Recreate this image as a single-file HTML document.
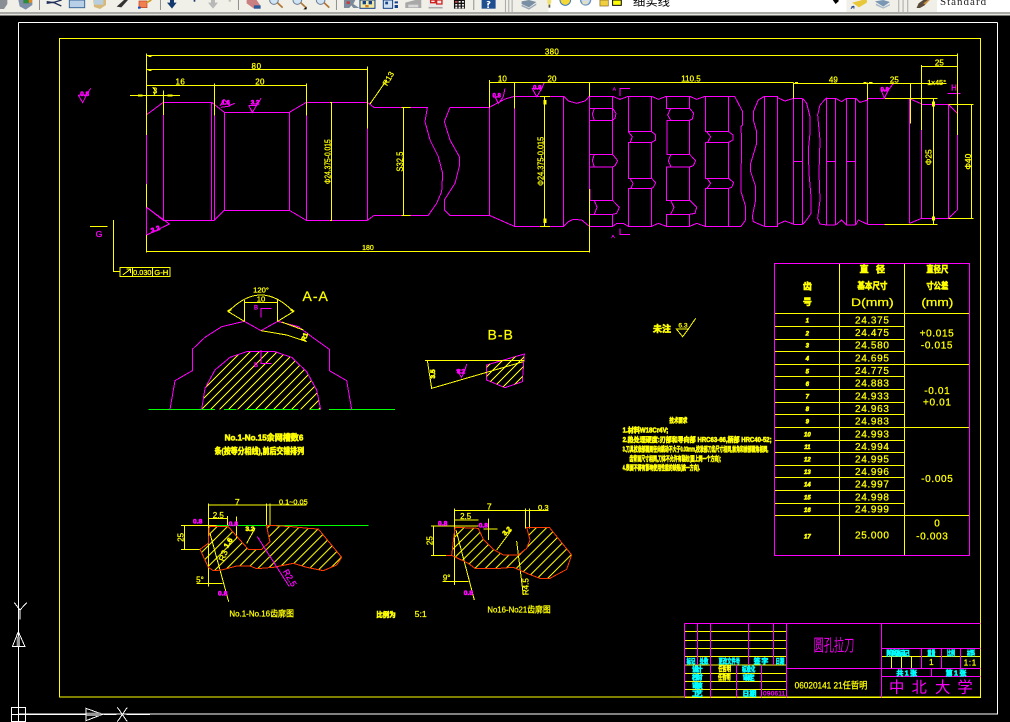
<!DOCTYPE html>
<html><head><meta charset="utf-8"><title>圆孔拉刀</title>
<style>
html,body{margin:0;padding:0;background:#000;width:1010px;height:722px;overflow:hidden}
svg{display:block;position:absolute;left:0;top:0}
.l{fill:none;stroke-width:3;shape-rendering:crispEdges}
.m{stroke:#f0f}.y{stroke:#ff0}.g{stroke:#0f0}.r{stroke:#ff3c00}.w{stroke:#fff}
text{font-family:"Liberation Sans","Noto Sans CJK SC",sans-serif;text-anchor:middle}
.ty{fill:#ff0;stroke:#ff0;stroke-width:.8}.tm{fill:#f0f;stroke:#f0f;stroke-width:.8}.tc{fill:#0ff;stroke:#0ff;stroke-width:.8}
.b{font-weight:700;stroke-width:1.8}
.s{text-anchor:start}
</style></head><body>
<svg width="1010" height="722" viewBox="0 0 1010 722" xmlns="http://www.w3.org/2000/svg">
<defs>
<pattern id="h1" patternUnits="userSpaceOnUse" width="27" height="27"><path d="M-3 30L30 -3M-16 16L16 -16M11 43L43 11" stroke="#ff0" stroke-width="2.4" fill="none" shape-rendering="crispEdges"/></pattern>
<pattern id="h2" patternUnits="userSpaceOnUse" width="31" height="31"><path d="M-3 34L34 -3M-18 18L18 -18M13 49L49 13" stroke="#ff0" stroke-width="2.4" fill="none" shape-rendering="crispEdges"/></pattern>
</defs>
<rect width="1010" height="722" fill="#000"/>

<!-- toolbar -->
<rect width="1010" height="15.5" fill="#f0efe8"/>
<rect y="12" width="1010" height="2" fill="#a8a8a4"/>
<rect y="14" width="1010" height="1" fill="#e4e3dc"/>
<rect x="548.5" width="298" height="12" fill="#fff"/>
<rect x="937" width="73" height="12" fill="#fff"/>
<g transform="scale(.3333)">
<path d="M0 0h22v12l-10 15H0z" fill="#8a8f96"/>
<path d="M55 0h42v15l-20 14-18-10z" fill="#7d8fa8"/><path d="M70 0h18v10H70z" fill="#2d8a3d"/><path d="M86 0h10v8H86z" fill="#e08a20"/>
<rect x="117" width="3" height="30" fill="#8f8f8f"/>
<path d="M140 5l22 3 22 10M140 10l25-4 20-6" stroke="#1f2f5a" stroke-width="4" fill="none"/>
<rect x="208" width="46" height="23" fill="#b8cfe8" stroke="#3c6a9c" stroke-width="3"/>
<path d="M280 0h38v15l-18 12-18-6z" fill="#d8b878"/><rect x="282" width="28" height="14" fill="#b8cfe0"/>
<path d="M350 20l22-20h12l-20 22z" fill="#333"/>
<rect x="417" y="3" width="24" height="20" fill="#f08050" stroke="#c04020" stroke-width="2"/><rect x="414" y="20" width="8" height="6" fill="#0b50c0"/><path d="M440 8l14-8" stroke="#c8a020" stroke-width="5"/>
<rect x="480" width="3" height="30" fill="#8f8f8f"/>
<path d="M510 0h12v8h8l-14 18-15-18h9z" fill="#13386e"/><rect x="581" width="5" height="5" fill="#13386e"/>
<path d="M633 0h12v8h9l-15 18-15-18h9z" fill="#b8b8b8"/><rect x="686" width="7" height="5" fill="#c0c0c0"/>
<rect x="714" width="3" height="30" fill="#8f8f8f"/>
<path d="M740 0h30l10 15v11h-18l-22-16z" fill="#c88080"/><path d="M762 16h20v10h-20z" fill="#2a5a9a"/>
<g fill="#cfe4f4" stroke="#6a7a90" stroke-width="3"><circle cx="822" cy="0" r="13"/><circle cx="892" cy="0" r="13"/><circle cx="962" cy="0" r="13"/></g>
<path d="M832 8l16 15M902 8l16 15M972 8l16 15" stroke="#b07838" stroke-width="5"/>
<path d="M910 28l10-8v8z" fill="#000"/>
<rect x="1008" width="3" height="30" fill="#8f8f8f"/>
<g transform="translate(1020,0)">
<path d="M12 0h34l-6 12 18 12H40l-6-8-6 8H12z" fill="#7a8a9a"/><rect x="20" y="4" width="10" height="8" fill="#c04040"/>
<rect x="60" width="45" height="25" fill="#f0e8a0" stroke="#14408a" stroke-width="3"/><rect x="68" y="3" width="10" height="10" fill="#14408a"/><rect x="86" y="3" width="10" height="10" fill="#14408a"/><rect x="76" y="15" width="10" height="7" fill="#d08020"/>
<rect x="130" width="28" height="25" fill="#cfe0f0" stroke="#14408a" stroke-width="3"/><rect x="136" y="5" width="8" height="8" fill="#14408a"/><path d="M164 4h10v6h-10zM164 15h10v9h-10z" fill="#14408a"/>
<path d="M196 8l30-8h18v24h-48z" fill="#a8a8a8"/><path d="M205 14h30v8h-30z" fill="#d8d8d8"/>
<path d="M266 0h42v18l-5 7h-37z" fill="#e8e8e8"/><path d="M272 0h14v8h-14zM290 0h16v12h-16z" fill="none" stroke="#d02020" stroke-width="4"/><rect x="266" y="22" width="42" height="3" fill="#888"/>
<rect x="342" width="33" height="26" fill="#111"/><path d="M346 3h6v5h-6zM356 3h6v5h-6zM366 3h6v5h-6zM346 12h6v5h-6zM356 12h6v5h-6zM366 12h6v5h-6zM346 20h6v5h-6zM356 20h6v5h-6zM366 20h6v5h-6z" fill="#f4f0f0"/><path d="M346 3h6v5h-6z" fill="#e03030"/>
<rect x="400" width="3" height="30" fill="#8f8f8f"/>
<rect x="425" width="42" height="26" fill="#1f4f90"/><path d="M440 4q10-4 12 4l-5 5v4h-5v-7l5-3q-3-3-6 0zM442 19h5v5h-5z" fill="#fff"/>
<path d="M495 0h3v36h-3zM505 0h3v36h-3zM515 0h3v36h-3z" fill="#a8a8a8"/>
<path d="M545 4l22-4 22 6-22 16-22-10z" fill="#7a8ea4"/><path d="M545 14l22 10 22-14v5l-22 14-22-10z" fill="#9aa8b8"/>
</g>
<path d="M1642 0h12v8l-3 5v9h-6v-9l-3-5z" fill="#f0e070"/><rect x="1646" y="14" width="5" height="9" fill="#555"/>
<circle cx="1696" cy="0" r="16" fill="#f5d838" stroke="#3a7ac0" stroke-width="3"/>
<g transform="translate(680,0)">
<circle cx="1077" cy="0" r="15" fill="#d0dcec" stroke="#6a90c0" stroke-width="4"/><rect x="1068" y="3" width="14" height="10" fill="#e0e0c0"/>
<rect x="1120" y="0" width="25" height="18" fill="#f0d040" stroke="#806020" stroke-width="2"/>
<rect x="1158" y="0" width="26" height="16" fill="#ff0" stroke="#000" stroke-width="3"/>
</g>
<path d="M2498 -1h18v5l-9 8z" fill="#000"/>
<g transform="translate(2040,0)">
<path d="M517 8l30-8h14v8l-24 14z" fill="#e8c838"/><path d="M513 26l8-8M515 20h7v6" stroke="#1a3a8a" stroke-width="3" fill="none"/>
<path d="M585 4l25-4 20 6-20 14z" fill="#7a98b4"/><path d="M588 10l22 12 20-10v4l-20 10-22-10z" fill="#a8b8c8"/>
<path d="M655 0h3v36h-3zM668 0h3v36h-3zM682 0h3v36h-3z" fill="#a8a8a8"/>
<path d="M710 24l6-14 14-10h18l-14 16-14 8z" fill="#5a4a3a"/><path d="M730 10l14-10h6l-14 14z" fill="#c89040"/>
</g>
</g>
<text class="s" x="633" y="5.5" font-size="11" fill="#000" textLength="37" lengthAdjust="spacingAndGlyphs">细实线</text>
<text x="940" y="5" class="s" font-size="11" fill="#222" letter-spacing="1" style="font-family:'Liberation Serif',serif">Standard</text>

<!-- frames -->
<g transform="scale(.33333)">
<path class="l w" d="M55 67H2992M55 67V2142M55 2142H2992V67" style="fill:none"/>
<path class="l y" d="M178 115H2942V2091H178z"/>
</g>

<!-- left shaft (zoom 1 coords) -->
<g transform="scale(.33333)">
<g class="l m">
<path d="M440 344L490 307H635V661H490L440 622M490 307V661M440 405V552M440 622V705"/>
<path d="M635 307L673 337H868L919 307H1102L1122 322H1282L1275 365 1290 420 1315 470 1328 520 1325 575 1310 610 1285 646H1122L1102 661H919L868 631H673L643 661H635"/>
<path d="M643 347V661M673 337V631M868 337V631M919 307V661M1102 385V661"/>
<path d="M1468 322H1350L1333 365 1350 420 1378 470 1379 495 1365 550 1333 600 1333 630 1350 646H1468M1468 322V646"/>
<path d="M235 285L248 308 262 280 272 265M235 285H260"/>
<path d="M746 316H770L757 337 746 316M770 316L783 295"/>
<path d="M660 318L672 298 690 316 704 310M663 322L690 318"/>
<path d="M440 622L508 672 440 705"/>
</g>
<g class="l y">
<path d="M440 160V405M440 552V622M440 705V758M440 754H1768M440 166H1515M440 209H1102M440 256H919"/>
<path d="M643 250V347M919 250V347M1102 200V385M490 272V345M390 286H540"/>
<path d="M994 307V661M1210 322V646M1205 322H1232M1205 646H1232"/>
<path d="M1110 312L1160 240M340 660V750M270 679H322"/>
<path d="M458 262Q470 270 462 284"/>
<path d="M445 169h9M445 212h9M445 256h10M630 256h11M648 256h10M905 256h12M1090 209h10M990 307h6M990 661h6"/>
<path d="M414 286h14M503 286h14" stroke-width="6"/>
</g>
<text class="ty" x="770" y="207" font-size="24" letter-spacing="2">80</text>
<text class="ty" x="541" y="254" font-size="24" letter-spacing="1">16</text>
<text class="ty" x="780" y="254" font-size="24" letter-spacing="1">20</text>
<text class="ty" x="465" y="281" font-size="24">3</text>
<text class="ty" transform="translate(992,485) rotate(-90)" font-size="24" textLength="134" lengthAdjust="spacingAndGlyphs">Φ24.375-0.015</text>
<text class="ty" transform="translate(1209,485) rotate(-90)" font-size="27" textLength="60" lengthAdjust="spacingAndGlyphs">S32.5</text>
<text class="ty" transform="translate(1172,240) rotate(-60)" font-size="24">R13</text>
<text class="tm" x="297" y="711" font-size="26">G</text>
<text class="tm b" x="254" y="288" font-size="19">0.8</text>
<text class="tm b" x="677" y="314" font-size="18">1.6</text>
<text class="tm b" x="765" y="313" font-size="18">3.2</text>
<text class="tm b" x="467" y="694" font-size="20" transform="rotate(-20 467 690)">3.2</text>
<text class="ty" x="1104" y="750" font-size="21">180</text>
</g>

<!-- right shaft (zoom 2 coords) -->
<g transform="translate(505,0) scale(.33333)">
<g class="l m">
<path d="M-47 322L0 297 28 289H176L190 303 215 310 240 303 253 289M28 325V679M176 289V679M-47 646L28 679H176L190 665 205 658 230 660 253 679"/>
<path d="M253 289V567M253 289H323V361H253M253 325H323L333 340 330 355 323 361M268 325L262 342 268 361M253 463H323L338 482 330 497 323 501H253M268 463L262 482 268 501M323 361V463M323 501V601M253 601H323L343 622 335 640 323 643H253M268 601L276 622 268 643M323 643V679H253M255 567V601"/>
<path d="M323 289L345 298 370 289M323 679L335 670 355 670 370 679"/>
<path d="M370 289H440V395H370zM370 427H440V535H370zM370 565H440V679H370zM440 395L452 405V420L440 427M370 395L382 410 376 427M440 535L452 548 445 562 440 565M375 535L384 550 378 565"/>
<path d="M440 289L460 298 484 289M440 679L460 670 484 679"/>
<path d="M484 289H554V325H484zM486 361H554V463H486zM484 501H554V601H484zM484 643H554V679H484zM554 325L566 340 562 357 554 361M497 325L488 345 497 361M554 463L572 482 565 497 554 501M498 463L490 482 498 501M554 601L575 622 570 640 554 643M497 601L507 622 497 643"/>
<path d="M554 289L575 298 600 289M554 679L575 670 600 679"/>
<path d="M601 289H671V395H601zM601 427H671V535H601zM601 565H671V679H601zM671 395L684 405V420L671 427M605 395L617 410 608 427M671 535L686 548 680 562 671 565M606 535L617 550 606 565"/>
<path d="M671 289H689L713 335V375L708 380 710 430 708 530V575L722 620V660L708 679H671"/>
<path d="M778 289L760 300 745 335V360L755 395V430L737 490V515L752 560V600L742 650 745 665 778 679M778 289V679M778 289H818V679H778"/>
<path d="M818 293L840 303 865 295M818 673L840 663 865 672M865 295V673M893 295V673M865 295H893M865 673H893M865 484H893M893 295L905 310 915 350V400L910 450 912 520 918 590V640L905 660 893 673"/>
<path d="M965 293L945 315 938 345 945 420 942 520 945 600 938 655 945 672 965 675M965 295V675M992 295V675M965 295H992M965 675H992M965 484H992"/>
<path d="M992 295L1010 305 1025 295M992 675L1010 660 1025 675M1025 295V675M1052 295V675M1025 295H1052M1025 675H1052M1025 484H1052"/>
<path d="M1052 295L1065 307 1088 300M1052 675L1060 660 1088 673M1088 295V673M1088 295H1140M1088 673H1138M1214 297V670"/>
<path d="M1214 296L1250 312M1214 670L1250 655M1250 390V655M1250 313H1330M1250 655H1330M1330 313V655M1330 313L1357 340M1330 655L1357 630M1357 405V630"/>
<path d="M345 288V265H375M345 685V703H375"/>
<path d="M82 266H110L95 290zM110 266L118 247M1128 270H1150L1138 294zM1150 270L1165 250"/>
<path d="M-30 290L-20 310-5 290M-5 290L0 265"/>
<path d="M1327 281H1367"/>
</g>
<g class="l y">
<path d="M-50 166H1357M1250 199H1357M-46 247H865M865 251H1325M-46 240V322M28 247V325M253 247V289M253 567V758M865 247V295M1088 247V300M1217 250V370M1250 195V390M1357 160V405"/>
<path d="M118 289V679M105 289H135M105 679H135M1140 295H1298M1138 673H1298M1285 295V673M1330 313H1406M1330 655H1406M1400 313V655"/>
<path d="M-38 247h10M15 247h10M32 247h10M240 247h10M258 247h10M855 247h9M870 247h9M1075 247h10M1092 247h10M1225 251h22M1345 166h10M1255 199h10M1345 199h10"/>
<path d="M120 300v14M120 655v14M1285 305v14M1285 649v12" stroke-width="9"/>
</g>
<text class="ty" x="141" y="164" font-size="24" letter-spacing="1">380</text>
<text class="ty" x="-8" y="245" font-size="24">10</text>
<text class="ty" x="141" y="245" font-size="24">20</text>
<text class="ty" x="558" y="245" font-size="24">110.5</text>
<text class="ty" x="985" y="248" font-size="24">49</text>
<text class="ty" x="1168" y="248" font-size="24">25</text>
<text class="ty" x="1303" y="197" font-size="24">25</text>
<text class="ty" x="1295" y="255" font-size="22">1x45°</text>
<text class="tm" x="1347" y="271" font-size="24">H</text>
<text class="tm" x="328" y="271" font-size="15">A</text>
<text class="tm" x="324" y="714" font-size="15">A</text>
<text class="tm b" x="97" y="269" font-size="18">0.8</text>
<text class="tm b" x="1139" y="274" font-size="18">0.8</text>
<text class="tm b" x="-25" y="293" font-size="18">0.8</text>
<text class="ty" transform="translate(115,484) rotate(-90)" font-size="24" textLength="147" lengthAdjust="spacingAndGlyphs">Φ24.375-0.015</text>
<text class="ty" transform="translate(1280,472) rotate(-90)" font-size="25">Φ25</text>
<text class="ty" transform="translate(1398,485) rotate(-90)" font-size="25">Φ40</text>
</g>

<!-- A-A, B-B (zoom 3 coords) -->
<g transform="translate(90,260) scale(.33333)">
<path class="l y" d="M70 -90V35H90M90 22H240V50H90zM128 22V50M187 22V50M98 45L122 27M110 27h12v12"/>
<text class="ty" x="157" y="45" font-size="22">0.030</text>
<text class="ty" x="214" y="45" font-size="23">G-H</text>
<path d="M335 448L345 385 375 330 420 292 470 275H555L605 292 650 335 680 390 692 448z" fill="url(#h1)" stroke="none"/>
<g class="l g"><path d="M175 448H375M402 448H440M465 448H625M660 448H692M717 448H915"/></g>
<g class="l m">
<path d="M240 448L255 362 307 332V268L345 232 395 200 463 184 513 212 563 184 625 200 665 230 718 268V332L770 362 785 448"/>
<path d="M335 448L345 385 375 330 420 292 470 275H555L605 292 650 335 680 390 692 448"/>
<path d="M513 172V145H545M513 270V310H545"/>
<path d="M1190 315L1303 282 1297 365 1245 383 1190 360z"/>
<path d="M1100 330H1125L1115 352zM1125 330L1130 312"/>
</g>
<path d="M1190 315L1303 282 1297 365 1245 383 1190 360z" fill="url(#h1)" stroke="none"/>
<g class="l y">
<path d="M463 120V184M563 120V184M463 128H563M415 155Q513 55 610 155M415 155L463 184M610 155L563 184"/>
<path d="M513 212L590 225 650 245M575 186L640 210"/>
<path d="M1005 301H1303M1012 301L1025 385 1300 305"/>
<path d="M413 155l10-7M612 155l-10-7" stroke-width="6"/>
</g>
<text class="ty" x="513" y="98" font-size="23">120°</text>
<text class="ty" x="513" y="125" font-size="23">10</text>
<text class="tm" x="498" y="149" font-size="18">B</text>
<text class="tm" x="498" y="321" font-size="18">B</text>
<text class="ty b" transform="translate(650,233) rotate(-70)" font-size="20">R1</text>
<text class="ty" x="677" y="123" font-size="42" letter-spacing="3">A-A</text>
<text class="ty" x="1232" y="238" font-size="42" letter-spacing="3">B-B</text>
<text class="ty b" transform="translate(1035,342) rotate(-90)" font-size="20">3.5</text>
<text class="tm b" x="1113" y="340" font-size="18">3.2</text>
<text class="ty b" x="522" y="542" font-size="25" textLength="236" lengthAdjust="spacingAndGlyphs">No.1-No.15余网槽数6</text>
<text class="ty b" x="508" y="582" font-size="25" textLength="268" lengthAdjust="spacingAndGlyphs">条(按等分相线),前后交错排列</text>
</g>

<!-- tooth profiles (zoom 4 coords) -->
<g transform="translate(150,480) scale(.33333)">
<path d="M150 208L175 262 190 272 215 270 260 258H300L320 266 370 262 430 250 470 262 520 272 560 255 575 232 505 147 475 145 425 140 375 137H350L355 165 360 185 335 208H295L270 180 235 140H178L175 190z" fill="url(#h2)" stroke="none"/>
<path d="M888 226H905L955 250 975 265H1050L1090 262 1135 282 1170 295H1200L1250 268 1265 225 1198 142H1130L1140 180 1130 205 1105 225H1060L1030 208 1000 178 985 145 915 142 905 226z" fill="url(#h2)" stroke="none"/>
<g class="l y">
<path d="M175 75H470M175 70V320M350 70V136M360 70V136M175 115H233M233 108V136M93 136H235M93 208H150M103 136V208"/>
<path d="M180 160L236 365M140 310H218M260 110V175M290 190L315 145"/>
<path d="M913 91H1195M913 85V315M1127 85V145M1138 85V145M913 120H985M843 138H985M843 226H890M851 138V226M1000 147H1043"/>
<path d="M918 150L973 360M1100 183L1120 345M878 305H955M1040 210L1085 150M1015 115V180"/>
</g>
<g class="l g"><path d="M200 136H655"/></g>
<g class="l r">
<path d="M150 208L175 262 190 272 215 270 260 258H300L320 266 370 262 430 250 470 262 520 272 560 255 575 232 505 147 475 145 425 140 375 137H350L355 165 360 185 335 208H295L270 180 235 140H178L175 190z"/>
<path d="M888 226H905L955 250 975 265H1050L1090 262 1135 282 1170 295H1200L1250 268 1265 225 1198 142H1130L1140 180 1130 205 1105 225H1060L1030 208 1000 178 985 145 915 142 905 226z"/>
</g>
<path class="l m" d="M322 170L418 320"/>
<text class="ty" x="262" y="75" font-size="26">7</text>
<text class="ty" x="430" y="74" font-size="22">0.1~0.05</text>
<text class="ty" x="205" y="114" font-size="24">2.5</text>
<text class="ty" transform="translate(100,172) rotate(-90)" font-size="24">25</text>
<text class="ty" x="150" y="308" font-size="24">5°</text>
<text class="ty" transform="translate(228,230) rotate(-70)" font-size="26">R3</text>
<text class="ty b" transform="translate(241,192) rotate(-60)" font-size="22">1.6</text>
<text class="ty b" x="300" y="153" font-size="20">3.2</text>
<text class="tm b" x="143" y="130" font-size="20">0.8</text>
<text class="tm b" x="250" y="138" font-size="20">0.8</text>
<text class="tm b" x="218" y="346" font-size="20">0.8</text>
<text class="tm" transform="translate(412,298) rotate(60)" font-size="26">R2.5</text>
<text class="ty" x="335" y="410" font-size="26" textLength="194" lengthAdjust="spacingAndGlyphs">No.1-No.16齿廓图</text>
<text class="ty b" x="708" y="411" font-size="20" textLength="58" lengthAdjust="spacingAndGlyphs">比例为</text>
<text class="ty" x="812" y="411" font-size="26">5:1</text>
<text class="ty" x="1018" y="88" font-size="26">7</text>
<text class="ty" x="1180" y="90" font-size="23">0.3</text>
<text class="ty" x="947" y="117" font-size="24">2.5</text>
<text class="ty" transform="translate(848,182) rotate(-90)" font-size="24">25</text>
<text class="ty" x="890" y="302" font-size="24">9°</text>
<text class="ty" transform="translate(1135,320) rotate(-90)" font-size="24">R4.5</text>
<text class="ty b" transform="translate(1075,158) rotate(-45)" font-size="20">3.2</text>
<text class="tm b" x="878" y="136" font-size="20">0.8</text>
<text class="tm b" x="1000" y="143" font-size="20">0.8</text>
<text class="tm b" x="955" y="345" font-size="20">0.8</text>
<text class="ty" x="1107" y="398" font-size="26" textLength="190" lengthAdjust="spacingAndGlyphs">No16-No21齿廓图</text>
</g>

<!-- table + notes (zoom 5 coords) -->
<g transform="translate(600,255) scale(.33333)">
<g class="l y">
<path d="M718 25V902M913 25V902M523 176H1108M718 214H913M718 253H913M718 289H913M523 328H1108M718 365H913M718 404H913M718 442H913M718 479H913M523 517H1108M718 556H913M718 593H913M718 631H913M718 668H913M718 707H913M718 745H913M523 781H1108"/>
<path d="M523 214H718M523 253H718M523 289H718M523 365H718M523 404H718M523 442H718M523 479H718M523 556H718M523 593H718M523 631H718M523 668H718M523 707H718M523 745H718"/>
</g>
<path class="l m" d="M523 25H1108V902H523z"/>
<g class="ty" font-size="30" letter-spacing="2">
<text x="817" y="205">24.375</text><text x="817" y="243">24.475</text><text x="817" y="281">24.580</text><text x="817" y="319">24.695</text>
<text x="817" y="357">24.775</text><text x="817" y="395">24.883</text><text x="817" y="434">24.933</text><text x="817" y="471">24.963</text><text x="817" y="509">24.983</text>
<text x="817" y="548">24.993</text><text x="817" y="585">24.994</text><text x="817" y="623">24.995</text><text x="817" y="660">24.996</text><text x="817" y="698">24.997</text><text x="817" y="736">24.998</text><text x="817" y="773">24.999</text>
<text x="817" y="851">25.000</text>
<text x="1011" y="244">+0.015</text><text x="1011" y="281">-0.015</text>
<text x="1012" y="417">-0.01</text><text x="1012" y="451">+0.01</text>
<text x="1012" y="681">-0.005</text>
<text x="1012" y="815">0</text><text x="997" y="854">-0.003</text>
</g>
<g class="ty b" font-size="18" font-style="italic">
<text x="622" y="203">1</text><text x="622" y="242">2</text><text x="622" y="278">3</text><text x="622" y="317">4</text><text x="622" y="355">5</text><text x="622" y="393">6</text><text x="622" y="431">7</text><text x="622" y="468">8</text><text x="622" y="506">9</text>
<text x="622" y="545">10</text><text x="622" y="582">11</text><text x="622" y="620">12</text><text x="622" y="657">13</text><text x="622" y="695">14</text><text x="622" y="733">15</text><text x="622" y="771">16</text><text x="622" y="851">17</text>
</g>
<g class="ty b" font-size="27">
<text x="622" y="103">齿</text><text x="622" y="150">号</text>
<text x="817" y="53" textLength="76" lengthAdjust="spacing">直 径</text>
<text x="817" y="102" textLength="90" lengthAdjust="spacingAndGlyphs">基本尺寸</text>
<text x="1012" y="53" textLength="66" lengthAdjust="spacingAndGlyphs">直径尺</text>
<text x="1012" y="102" textLength="66" lengthAdjust="spacingAndGlyphs">寸公差</text>
</g>
<text class="ty" x="817" y="153" font-size="34" textLength="128" lengthAdjust="spacingAndGlyphs">D(mm)</text>
<text class="ty" x="1012" y="153" font-size="34" textLength="96" lengthAdjust="spacingAndGlyphs">(mm)</text>

<text class="ty b" x="186" y="231" font-size="27">未注</text>
<text class="ty" x="249" y="217" font-size="20">6.3</text>
<path class="l y" d="M229 222H265L248 245zM265 222L287 190"/>
<text class="ty b" x="235" y="503" font-size="19" textLength="54" lengthAdjust="spacingAndGlyphs">技术要求</text>
<g class="ty b" font-size="21">
<text class="s" x="68" y="532" textLength="137" lengthAdjust="spacingAndGlyphs">1.材料W18Cr4V;</text>
<text class="s" x="68" y="561" textLength="447" lengthAdjust="spacingAndGlyphs">2.热处理硬度:刃部和导向部 HRC63-66,柄部 HRC40-52;</text>
<text class="s" x="68" y="589" textLength="437" lengthAdjust="spacingAndGlyphs">3.刀具校准部圆周径向跳动不大于0.03mm,校准部刀齿尺寸相同,前角和前部圆角相同,</text>
<text class="s" x="88" y="618" textLength="275" lengthAdjust="spacingAndGlyphs">齿背面尺寸相同,刀体不允许有裂纹(图上同一个方向);</text>
<text class="s" x="68" y="645" textLength="232" lengthAdjust="spacingAndGlyphs">4.表面不得有影响使用性能的缺陷(统一方向).</text>
</g>
</g>

<!-- title block (zoom 6 coords) -->
<g transform="translate(680,615) scale(.33333)">
<g class="l y">
<path d="M902 0V247H13M13 50H320M13 77H320M13 100H320M13 124H320M13 150H320M13 176H320M13 200H320M13 224H320M604 124H902M634 124V160M664 124V160M695 124V160"/>
</g>
<g class="l m">
<path d="M13 25H902M13 25V247M52 25V150M91 25V247M205 25V150M280 25V150M320 25V247M604 25V247M170 150V247M245 150V247M320 160H902M604 100H902M725 100V160M785 100V160M842 100V160M604 184H902M755 160V184"/>
</g>
<text class="tm" x="462" y="108" font-size="50" textLength="122" lengthAdjust="spacingAndGlyphs" font-weight="300">圆孔拉刀</text>
<text class="ty" x="453" y="221" font-size="28" textLength="218" lengthAdjust="spacingAndGlyphs">06020141 21任哲明</text>
<g class="tm" font-size="46" style="stroke:none"><text x="650" y="233">中</text><text x="718" y="233">北</text><text x="788" y="233">大</text><text x="855" y="233">学</text></g>
<text class="ty" x="754" y="150" font-size="24">1</text>
<text class="ty" x="871" y="151" font-size="24" letter-spacing="2">1:1</text>
<text class="tm" x="283" y="242" font-size="19" letter-spacing="1">090611</text>
<g class="tc b" font-size="21">
<text x="33" y="145" textLength="26" lengthAdjust="spacingAndGlyphs">标记</text><text x="72" y="145" textLength="26" lengthAdjust="spacingAndGlyphs">处数</text>
<text x="148" y="145" textLength="64" lengthAdjust="spacingAndGlyphs">更改文件号</text>
<text x="243" y="145" textLength="44" lengthAdjust="spacing">签 字</text>
<text x="300" y="145" textLength="26" lengthAdjust="spacingAndGlyphs">日期</text>
<text x="52" y="169" textLength="32" lengthAdjust="spacing">设 计</text><text x="52" y="194" textLength="32" lengthAdjust="spacing">校 对</text><text x="52" y="219" textLength="32" lengthAdjust="spacing">审 核</text><text x="52" y="243" textLength="32" lengthAdjust="spacing">工 艺</text>
<text x="206" y="170" textLength="40" lengthAdjust="spacingAndGlyphs">标准化</text>
<text x="206" y="195" textLength="36" lengthAdjust="spacing">审 定</text>
<text x="208" y="243" textLength="42" lengthAdjust="spacing">日 期</text>
<text x="654" y="121" textLength="70" lengthAdjust="spacing">阶 段 标 记</text>
<text x="754" y="121" textLength="24" lengthAdjust="spacingAndGlyphs">重量</text>
<text x="813" y="121" textLength="24" lengthAdjust="spacingAndGlyphs">比例</text>
<text x="873" y="121" textLength="24" lengthAdjust="spacingAndGlyphs">材料</text>
<text x="680" y="181" textLength="62" lengthAdjust="spacing">共 1 张</text>
<text x="828" y="181" textLength="62" lengthAdjust="spacing">第 1 张</text>
</g>
<g class="ty b" font-size="21">
<text x="134" y="168" textLength="38" lengthAdjust="spacingAndGlyphs">任哲明</text>
<text x="133" y="194" textLength="38" lengthAdjust="spacingAndGlyphs">任哲明</text>
</g>
</g>

<!-- UCS icon (zoom 7 coords) -->
<g transform="translate(0,590) scale(.33333)">
<path class="l w" d="M34 352H77V395H34zM55 352V395M34 373H77M77 373H260M310 373H350M380 373H450"/>
<path class="l w" d="M55 125L37 170H75zM258 355V392L308 373zM43 38L60 60 80 38M60 60V88M352 352L382 395M382 352L352 395"/>
<path d="M50 140H60V168H50zM260 368H302V378H260z" fill="#999"/>
</g>
</svg>
</body></html>
